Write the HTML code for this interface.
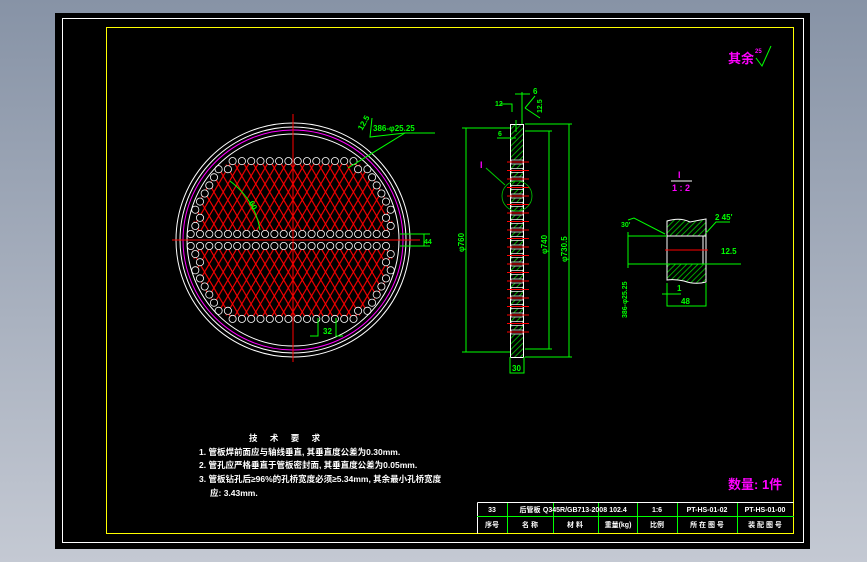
<!DOCTYPE html>
<html><head><meta charset="utf-8"><style>
html,body{margin:0;padding:0;width:867px;height:562px;overflow:hidden;background:linear-gradient(#8793a6,#c4c9d3);}
svg{position:absolute;left:0;top:0}
text{font-family:"Liberation Sans","Noto Sans CJK SC",sans-serif;font-weight:bold}
</style></head><body>
<svg width="867" height="562" viewBox="0 0 867 562">
<defs>
<pattern id="rx" width="9.3" height="16" patternUnits="userSpaceOnUse">
<path d="M0 0L9.3 16M9.3 0L0 16M-4.65 8L4.65 -8M4.65 24L-4.65 8" stroke="#f00" stroke-width="1.1" fill="none"/>
</pattern>
<pattern id="gh" width="4" height="4" patternUnits="userSpaceOnUse" patternTransform="rotate(45)">
<line x1="0" y1="0" x2="0" y2="4" stroke="#0c0" stroke-width="1.6"/>
</pattern>
<clipPath id="cc"><circle cx="293" cy="240" r="101"/></clipPath>
</defs>
<rect x="55" y="13" width="755" height="536" fill="#000"/>
<rect x="62.5" y="18.5" width="741" height="524" fill="none" stroke="#fff" stroke-width="1"/>
<rect x="106.5" y="27.5" width="687" height="506" fill="none" stroke="#ff0" stroke-width="1"/>

<g clip-path="url(#cc)">
<rect x="190" y="158" width="207" height="76" fill="url(#rx)"/>
<rect x="190" y="246" width="207" height="76" fill="url(#rx)"/>
</g>
<g id="holes" fill="#000" stroke="#fff" stroke-width="0.8"></g>
<circle cx="293" cy="240" r="117" fill="none" stroke="#fff"/>
<circle cx="293" cy="240" r="113" fill="none" stroke="#fff"/>
<circle cx="293" cy="240" r="110" fill="none" stroke="#f0f"/>
<circle cx="293" cy="240" r="106" fill="none" stroke="#fff"/>
<line x1="293" y1="114" x2="293" y2="362" stroke="#f00"/>
<line x1="172" y1="240" x2="420" y2="240" stroke="#f00"/>
<path d="M230 181 Q255 200 260 230" stroke="#0f0" fill="none"/>
<text x="250" y="206" fill="#0f0" font-size="8" transform="rotate(60 252 203)">60</text>
<path d="M348 168 L405 133 L435 133" stroke="#0f0" fill="none"/>
<text x="373" y="131" fill="#0f0" font-size="8">386-φ25.25</text>
<text x="357" y="128" fill="#0f0" font-size="8" transform="rotate(-60 362 125)">12.5</text>
<path d="M405 133 L370 137 L372 118" stroke="#0f0" fill="none"/>
<path d="M400 234 H430 M400 246 H430 M424 234 V246" stroke="#0f0" fill="none"/>
<text x="424" y="244" fill="#0f0" font-size="7">44</text>
<path d="M318 318 V336 H310 M336 318 V336 H343" stroke="#0f0" fill="none"/>
<text x="323" y="334" fill="#0f0" font-size="8">32</text>

<rect x="510.5" y="124.5" width="13" height="233" fill="url(#gh)" stroke="#fff"/>
<g id="side"></g>
<path d="M466 128 V352 M462 128 H510 M462 352 H510" stroke="#0f0" fill="none"/>
<text x="0" y="0" fill="#0f0" font-size="8" transform="translate(464 252) rotate(-90)">φ760</text>
<path d="M549 131 V349 M525 131 H552 M525 349 H552" stroke="#0f0" fill="none"/>
<text x="0" y="0" fill="#0f0" font-size="8" transform="translate(547 254) rotate(-90)">φ740</text>
<path d="M569 124 V357 M525 124 H572 M525 357 H572" stroke="#0f0" fill="none"/>
<text x="0" y="0" fill="#0f0" font-size="8" transform="translate(567 262) rotate(-90)">φ730.5</text>
<path d="M510 357 V373 H524 V357" stroke="#0f0" fill="none"/>
<text x="512" y="371" fill="#0f0" font-size="8">30</text>
<path d="M497 138 H516 M516 120 V132 M515 94 H530 M522 92 V124" stroke="#0f0" fill="none"/>
<text x="498" y="136" fill="#0f0" font-size="7">6</text>
<text x="533" y="94" fill="#0f0" font-size="8">6</text>
<text x="0" y="0" fill="#0f0" font-size="7" transform="translate(542 113) rotate(-90)">12.5</text>
<path d="M525 108 L540 118 M525 108 L535 96" stroke="#0f0" fill="none"/>
<text x="495" y="106" fill="#0f0" font-size="7">12</text>
<path d="M500 104 L512 104 L512 112" stroke="#0f0" fill="none"/>
<circle cx="517" cy="196" r="15" fill="none" stroke="#0c0" stroke-width="0.8"/>
<path d="M486 168 L505 185" stroke="#0c0" fill="none"/>
<text x="480" y="168" fill="#f0f" font-size="9">I</text>

<text x="678" y="178" fill="#f0f" font-size="9">I</text>
<line x1="671" y1="181" x2="692" y2="181" stroke="#fff"/>
<text x="672" y="191" fill="#f0f" font-size="9">1 : 2</text>
<path d="M667 221 Q680 217 690 222 Q700 220 706 219 V236 H667 Z" fill="url(#gh)" stroke="#fff"/>
<path d="M667 264 H706 V282 Q695 285 684 281 Q675 279 667 280 Z" fill="url(#gh)" stroke="#fff"/>
<path d="M667 236 V264 M706 236 V264 M703 236 V264" stroke="#fff"/>
<line x1="665" y1="250" x2="708" y2="250" stroke="#f00"/>
<path d="M628 236 H667 M628 264 H741 M628 232 V268 M628 220 L634 218 L665 234 M706 233 L716 222 H730 M667 283 V306 H706 V283 M662 294 H681" stroke="#0f0" fill="none"/>
<text x="715" y="220" fill="#0f0" font-size="8">2 45'</text>
<text x="721" y="254" fill="#0f0" font-size="8">12.5</text>
<text x="621" y="227" fill="#0f0" font-size="7">30'</text>
<text x="677" y="291" fill="#0f0" font-size="8">1</text>
<text x="681" y="304" fill="#0f0" font-size="8">48</text>
<text x="0" y="0" fill="#0f0" font-size="7" transform="translate(627 318) rotate(-90)">386-φ25.25</text>

<text x="728" y="63" fill="#f0f" font-size="13">其余</text>
<text x="755" y="53" fill="#f0f" font-size="6">25</text>
<path d="M756 58 L762 66 L771 46" stroke="#0f0" fill="none"/>
<text x="728" y="489" fill="#f0f" font-size="13">数量: 1件</text>

<g fill="#fff" font-size="8.5">
<text x="249" y="441" letter-spacing="5">技 术 要 求</text>
<text x="199" y="455">1. 管板焊前面应与轴线垂直, 其垂直度公差为0.30mm.</text>
<text x="199" y="468">2. 管孔应严格垂直于管板密封面, 其垂直度公差为0.05mm.</text>
<text x="199" y="482">3. 管板钻孔后≥96%的孔桥宽度必须≥5.34mm, 其余最小孔桥宽度</text>
<text x="210" y="496">应: 3.43mm.</text>
</g>

<path d="M477.5 502.5 H793.5 M477.5 502.5 V533.5" stroke="#fff" fill="none"/>
<path d="M477 516.5 H794 M507.5 503 V533 M553.5 503 V533 M598.5 503 V533 M637.5 503 V533 M677.5 503 V533 M737.5 503 V533" stroke="#0f0" fill="none"/>
<g fill="#fff" font-size="7" text-anchor="middle">
<text x="492" y="512">33</text><text x="530" y="512">后管板</text><text x="575" y="512">Q345R/GB713-2008</text><text x="618" y="512">102.4</text><text x="657" y="512">1:6</text><text x="707" y="512">PT-HS-01-02</text><text x="765" y="512">PT-HS-01-00</text>
<text x="492" y="527">序号</text><text x="530" y="527">名 称</text><text x="575" y="527">材 料</text><text x="618" y="527">重量(kg)</text><text x="657" y="527">比例</text><text x="707" y="527">所 在 图 号</text><text x="765" y="527">装 配 图 号</text>
</g>
</svg>
<script>
(function(){
var ns="http://www.w3.org/2000/svg",g=document.getElementById("holes"),cx=293,cy=240;
function c(x,y){var e=document.createElementNS(ns,"circle");e.setAttribute("cx",x);e.setAttribute("cy",y);e.setAttribute("r",3.6);g.appendChild(e);}
var p=9.3;
for(var s=-1;s<=1;s+=2){
 for(var k=0;k<10;k++){
  var y=cy+s*(6+k*8.1);
  var off=(k%2)?p/2:0;
  for(var x=cx-11*p+off;x<=cx+11*p;x+=p){
   var d=Math.hypot(x-cx,y-cy);
   if(d>103)continue;
   var edge=(k==0)||d>94||k==9;
   if(edge)c(x.toFixed(1),y.toFixed(1));
  }
 }
}
var sg=document.getElementById("side");
for(var i=0;i<21;i++){var yy=160+i*8.5;
 var r=document.createElementNS(ns,"rect");r.setAttribute("x",511);r.setAttribute("y",yy);r.setAttribute("width",12);r.setAttribute("height",4);r.setAttribute("fill","#000");r.setAttribute("stroke","#fff");r.setAttribute("stroke-width","0.7");sg.appendChild(r);
 var l=document.createElementNS(ns,"line");l.setAttribute("x1",507);l.setAttribute("x2",529);l.setAttribute("y1",yy+2);l.setAttribute("y2",yy+2);l.setAttribute("stroke","#f00");sg.appendChild(l);}
})();
</script>
</body></html>
